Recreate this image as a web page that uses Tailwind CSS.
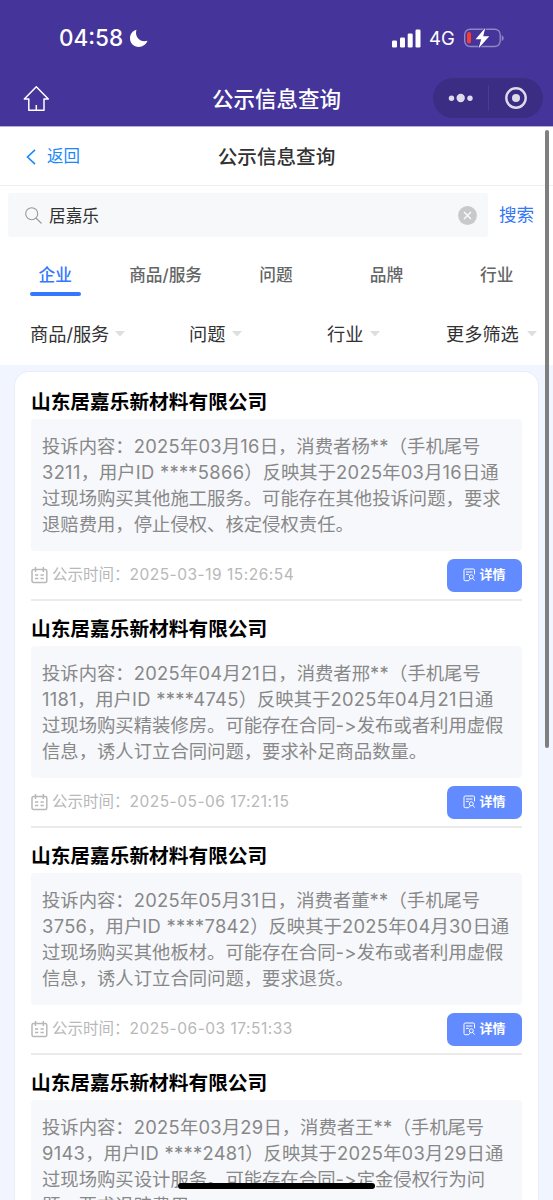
<!DOCTYPE html>
<html lang="zh-CN">
<head>
<meta charset="utf-8">
<title>公示信息查询</title>
<script src="https://cdn.jsdelivr.net/npm/@tailwindcss/browser@4"></script>
</head>
<body class="relative h-[1200px] w-[553px] overflow-hidden bg-white font-['Inter','Noto_Sans_CJK_SC',sans-serif] text-[#323233]">
<svg class="hidden">
  <symbol id="cal" viewBox="0 0 17 17"><g fill="none" stroke="currentColor" stroke-width="1.500"><rect x="1" y="2.500" width="14.800" height="13" rx="1.500"/><path d="M4.500 0V5M12.300 0V5M4 8h3.300M9.500 8h3.300M4 11.500h3.300M9.500 11.500h3.300"/></g></symbol>
  <symbol id="doc" viewBox="0 0 13 14"><g fill="none" stroke="currentColor" stroke-width="1"><path d="M11.5 6.3V2.2a1.2 1.2 0 0 0-1.2-1.2H2.2A1.2 1.2 0 0 0 1 2.2v9.3a1.2 1.2 0 0 0 1.2 1.2h3.6M3 4h6.5M3 6.4h2.8"/><circle cx="8.3" cy="8.8" r="2"/><path d="M9.700 10.400l2 2.200M7 11l-1.200 1.600"/></g></symbol>
  <symbol id="tri" viewBox="0 0 10 6"><path d="M0 0h10L5 5.500z" fill="#dcdee0"/></symbol>
</svg>

<header class="h-[126px] bg-[#45359a] text-white">
  <div class="flex h-[70px] items-center pt-[6px] pl-[59px]">
    <span class="w-[66px] whitespace-nowrap text-[22.5px] font-medium">04:58</span>
    <svg class="ml-1 h-[19px] w-[19px]" viewBox="0 0 19 19"><path d="M7.500.8C5.300 7.200 10.500 14 18.500 11.800 16.800 15.800 13.500 18 9.800 18 4.800 18 1 14.200 1 9.300 1 5.300 3.500 1.900 7.500.8z" fill="#fff"/></svg>
    <svg class="ml-[244px] h-[19px] w-[29px]" viewBox="0 0 29 19"><g fill="#fff"><rect x="0" y="11.500" width="5" height="7" rx="1.300"/><rect x="8" y="8.500" width="5" height="10" rx="1.300"/><rect x="15.700" y="4.500" width="5" height="14" rx="1.300"/><rect x="23.500" y=".5" width="5" height="18" rx="1.300"/></g></svg>
    <span class="ml-[8px] w-[27px] whitespace-nowrap pt-px text-[18.5px]">4G</span>
    <svg class="ml-[7px] h-[22px] w-[42px]" viewBox="0 0 42 22"><rect x="1.700" y="2.200" width="35.500" height="17.300" rx="5.500" fill="none" stroke="#8f86c3" stroke-width="1.400"/><path d="M38.700 8.200c2.700.8 2.700 5 0 5.800z" fill="#8f86c3"/><rect x="4" y="5" width="4" height="11.500" rx="2" fill="#fb3b30"/><path d="M22.300.8L12.600 12.200h5.600L15.600 21.300 26.300 9.200h-6.100z" fill="#fff" stroke="#45359a" stroke-width="1.600" paint-order="stroke"/></svg>
  </div>
  <div class="grid h-[56px] grid-cols-3 items-center">
    <svg class="ml-[23px] h-[27px] w-[27px]" viewBox="0 0 27 27"><path d="M1.300 14L13.300 1.800 25.300 14H21v11.200H5.800V14zM13.300 25v-5" fill="none" stroke="#fff" stroke-width="1.500" stroke-linejoin="round"/></svg>
    <h1 class="whitespace-nowrap pt-[2px] text-center text-[21.5px] font-medium">公示信息查询</h1>
    <div class="mr-[10px] flex h-[40px] w-[110px] items-center justify-self-end rounded-full bg-[#3b2d84]">
      <svg class="h-[40px] w-[110px]" viewBox="0 0 110 40"><g fill="#dedbeb"><circle cx="18.500" cy="20.200" r="2.700"/><circle cx="27.700" cy="20" r="4.200"/><circle cx="37" cy="20.200" r="2.700"/><circle cx="83" cy="20" r="4"/></g><circle cx="83" cy="20" r="9.700" fill="none" stroke="#dedbeb" stroke-width="2.400"/><path d="M55.500 7.500v25" stroke="#4a3d8e"/></svg>
    </div>
  </div>
</header>

<nav class="grid h-[60px] grid-cols-3 items-center border-t border-b border-t-[#b5aed6] border-b-[#eeeef0]">
  <a class="ml-[26px] flex items-center pt-px text-[16.5px] text-[#1989fa]"><svg class="mr-[11px] h-[16px] w-[10px]" viewBox="0 0 10 16"><path d="M9 .8L1.500 8 9 15.200" fill="none" stroke="currentColor" stroke-width="1.600"/></svg>返回</a>
  <h2 class="pt-[4px] text-center text-[19.6px] font-medium">公示信息查询</h2>
</nav>

<div class="flex pt-[7px] pl-[8px]">
  <div class="flex h-[44px] w-[480px] items-center rounded-[3px] bg-[#f7f8fa] pl-[17px]">
    <svg class="h-[17px] w-[17px]" viewBox="0 0 17 17"><g fill="none" stroke="#999" stroke-width="1.100"><circle cx="6.700" cy="6.700" r="6"/><path d="M11 11l5.500 5.500"/></g></svg>
    <span class="ml-[7px] pt-[3px] text-[16.7px]">居嘉乐</span>
    <svg class="mr-[11px] ml-auto h-[19px] w-[19px]" viewBox="0 0 19 19"><circle cx="9.500" cy="9.500" r="9.400" fill="#c8c9cc"/><path d="M6 6l7 7M13 6l-7 7" stroke="#fff" stroke-width="1.200"/></svg>
  </div>
  <span class="ml-[11px] text-[17.6px] leading-[44px] text-[#3478f6]">搜索</span>
</div>

<div class="grid h-[60px] w-[552px] grid-cols-5 text-center text-[16.7px] font-medium leading-[76px] text-[#646566]">
  <div class="flex flex-col items-center text-[#3478ff]"><span class="h-[55px]">企业</span><i class="h-[4px] w-[51px] rounded-full bg-[#3478ff]"></i></div>
  <span>商品/服务</span><span>问题</span><span>品牌</span><span>行业</span>
</div>

<div class="flex h-[68px] items-center pt-[8px] pl-[30px] text-[18.2px] whitespace-nowrap">
  <div class="flex w-[159px] items-center gap-[6px]">商品/服务<svg class="mb-px h-[6px] w-[10px]"><use href="#tri"/></svg></div>
  <div class="flex w-[138px] items-center gap-[7px]">问题<svg class="mb-px h-[6px] w-[10px]"><use href="#tri"/></svg></div>
  <div class="flex w-[119px] items-center gap-[7px]">行业<svg class="mb-px h-[6px] w-[10px]"><use href="#tri"/></svg></div>
  <div class="flex items-center gap-[8px]">更多筛选<svg class="mb-px h-[6px] w-[10px]"><use href="#tri"/></svg></div>
</div>

<main class="h-[835px] overflow-hidden bg-[#f0f5ff] px-[15px] pt-[7px]">
  <div class="h-[860px] rounded-[14px] bg-white px-[16px] pt-[2px] ring-1 ring-[#e8edf8]">
    <article>
      <h3 class="h-[45px] text-[19.7px] leading-[57px] font-bold text-black">山东居嘉乐新材料有限公司</h3>
      <div class="h-[132px] rounded-[4px] bg-[#f7f8fc] px-[11px] pt-[14px] text-[18.35px] leading-[26px] [font-variant-ligatures:none] whitespace-nowrap text-[#888]">
        <p>投诉内容：2025年03月16日，消费者杨**（手机尾号</p><p>3211，用户ID ****5866）反映其于2025年03月16日通</p><p>过现场购买其他施工服务。可能存在其他投诉问题，要求</p><p>退赔费用，停止侵权、核定侵权责任。</p>
      </div>
      <div class="flex h-[50px] items-center border-b-2 border-[#ebebeb] text-[15.5px] text-[#b8b8b8]"><svg class="mr-[4px] h-[17px] w-[17px]"><use href="#cal"/></svg><span>公示时间：</span><time class="tracking-[0.5px]">2025-03-19 15:26:54</time><button class="ml-auto flex h-[33px] w-[75px] items-center justify-center gap-[3px] rounded-[7px] bg-[#628bff] text-[13px] font-bold text-white"><svg class="h-[14px] w-[13px]"><use href="#doc"/></svg>详情</button></div>
    </article>
    <article>
      <h3 class="h-[45px] text-[19.7px] leading-[57px] font-bold text-black">山东居嘉乐新材料有限公司</h3>
      <div class="h-[132px] rounded-[4px] bg-[#f7f8fc] px-[11px] pt-[14px] text-[18.35px] leading-[26px] [font-variant-ligatures:none] whitespace-nowrap text-[#888]">
        <p>投诉内容：2025年04月21日，消费者邢**（手机尾号</p><p>1181，用户ID ****4745）反映其于2025年04月21日通</p><p>过现场购买精装修房。可能存在合同-&gt;发布或者利用虚假</p><p>信息，诱人订立合同问题，要求补足商品数量。</p>
      </div>
      <div class="flex h-[50px] items-center border-b-2 border-[#ebebeb] text-[15.5px] text-[#b8b8b8]"><svg class="mr-[4px] h-[17px] w-[17px]"><use href="#cal"/></svg><span>公示时间：</span><time class="tracking-[0.5px]">2025-05-06 17:21:15</time><button class="ml-auto flex h-[33px] w-[75px] items-center justify-center gap-[3px] rounded-[7px] bg-[#628bff] text-[13px] font-bold text-white"><svg class="h-[14px] w-[13px]"><use href="#doc"/></svg>详情</button></div>
    </article>
    <article>
      <h3 class="h-[45px] text-[19.7px] leading-[57px] font-bold text-black">山东居嘉乐新材料有限公司</h3>
      <div class="h-[132px] rounded-[4px] bg-[#f7f8fc] px-[11px] pt-[14px] text-[18.35px] leading-[26px] [font-variant-ligatures:none] whitespace-nowrap text-[#888]">
        <p>投诉内容：2025年05月31日，消费者董**（手机尾号</p><p>3756，用户ID ****7842）反映其于2025年04月30日通</p><p>过现场购买其他板材。可能存在合同-&gt;发布或者利用虚假</p><p>信息，诱人订立合同问题，要求退货。</p>
      </div>
      <div class="flex h-[50px] items-center border-b-2 border-[#ebebeb] text-[15.5px] text-[#b8b8b8]"><svg class="mr-[4px] h-[17px] w-[17px]"><use href="#cal"/></svg><span>公示时间：</span><time class="tracking-[0.5px]">2025-06-03 17:51:33</time><button class="ml-auto flex h-[33px] w-[75px] items-center justify-center gap-[3px] rounded-[7px] bg-[#628bff] text-[13px] font-bold text-white"><svg class="h-[14px] w-[13px]"><use href="#doc"/></svg>详情</button></div>
    </article>
    <article>
      <h3 class="h-[45px] text-[19.7px] leading-[57px] font-bold text-black">山东居嘉乐新材料有限公司</h3>
      <div class="h-[132px] rounded-[4px] bg-[#f7f8fc] px-[11px] pt-[14px] text-[18.35px] leading-[26px] [font-variant-ligatures:none] whitespace-nowrap text-[#888]">
        <p>投诉内容：2025年03月29日，消费者王**（手机尾号</p><p>9143，用户ID ****2481）反映其于2025年03月29日通</p><p>过现场购买设计服务。可能存在合同-&gt;定金侵权行为问</p><p>题，要求退赔费用。</p>
      </div>
    </article>
  </div>
</main>

<div class="absolute top-[130px] left-[545px] h-[618px] w-[4px] rounded-full bg-[#7f7f80]"></div>
<div class="absolute top-[1183px] left-[178px] h-[6px] w-[197px] rounded-full bg-black"></div>
<script>
  // Give Latin runs inside the Chinese paragraphs slightly looser tracking.
  document.querySelectorAll('article p').forEach(function (p) {
    p.innerHTML = p.innerHTML.replace(/&gt;/g, '>').replace(/[0-9A-Z*>\- ]+/g, function (run) {
      return '<span class="tracking-[0.3px]">' + run.replace('>', '&gt;') + '</span>';
    });
  });
</script>
</body>
</html>
